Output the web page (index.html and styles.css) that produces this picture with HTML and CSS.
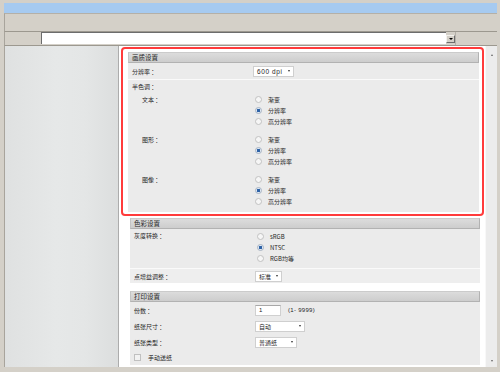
FILE: index.html
```
<!DOCTYPE html>
<html>
    <head>
        <title>打印机设置</title>
        <link rel="stylesheet" href="styles.css">
    </head>
    <body>
        <div class="window">
            <div class="titlebar"></div>
            <div class="toolbar"></div>
            <div class="addressbar">
                <div class="address-left"></div>
                <div class="address-field"></div>
                <div class="address-button"><span class="arrow-down"></span></div>
                <div class="address-right"></div>
            </div>
            <div class="workspace">
                <div class="sidebar"></div>
                <div class="content">
                    <div class="highlight">
                        <div class="section">
                            <div class="section-title">画质设置</div>
                            <div class="row divided">
                                <div class="label">分辨率 ：</div>
                                <span class="select select-dpi">600 dpi<span class="caret"></span></span>
                            </div>
                            <div class="halftone">
                                <div class="halftone-title">半色调 ：</div>
                                <div class="groups">
                                    <div class="group">
                                        <div class="sublabel">文本 ：</div>
                                        <div class="radios">
                                            <div class="radio"><span class="dot"></span>渐变</div>
                                            <div class="radio"><span class="dot checked"></span>分辨率</div>
                                            <div class="radio"><span class="dot"></span>高分辨率</div>
                                        </div>
                                    </div>
                                    <div class="group">
                                        <div class="sublabel">图形 ：</div>
                                        <div class="radios">
                                            <div class="radio"><span class="dot"></span>渐变</div>
                                            <div class="radio"><span class="dot checked"></span>分辨率</div>
                                            <div class="radio"><span class="dot"></span>高分辨率</div>
                                        </div>
                                    </div>
                                    <div class="group">
                                        <div class="sublabel">图像 ：</div>
                                        <div class="radios">
                                            <div class="radio"><span class="dot"></span>渐变</div>
                                            <div class="radio"><span class="dot checked"></span>分辨率</div>
                                            <div class="radio"><span class="dot"></span>高分辨率</div>
                                        </div>
                                    </div>
                                </div>
                            </div>
                        </div>
                    </div>

                    <div class="section section-plain">
                        <div class="section-title">色彩设置</div>
                        <div class="grayscale divided">
                            <div class="label grayscale-label">灰度转换 ：</div>
                            <div class="radios">
                                <div class="radio"><span class="dot"></span>sRGB</div>
                                <div class="radio"><span class="dot checked"></span>NTSC</div>
                                <div class="radio"><span class="dot"></span>RGB均等</div>
                            </div>
                        </div>
                        <div class="row row-light">
                            <div class="label">点增益调整 ：</div>
                            <span class="select select-std">标准<span class="caret"></span></span>
                        </div>
                    </div>

                    <div class="section section-plain section-print">
                        <div class="section-title">打印设置</div>
                        <div class="row">
                            <div class="label">份数 ：</div>
                            <span class="input">1</span>
                            <span class="hint">(1- 9999)</span>
                        </div>
                        <div class="row">
                            <div class="label">纸张尺寸 ：</div>
                            <span class="select select-size">自动<span class="caret"></span></span>
                        </div>
                        <div class="row">
                            <div class="label">纸张类型 ：</div>
                            <span class="select select-type">普通纸<span class="caret"></span></span>
                        </div>
                        <div class="check-row">
                            <span class="checkbox"></span>手动送纸
                        </div>
                    </div>
                </div>
                <div class="scrollbar">
                    <span class="scroll-up"></span>
                    <span class="scroll-down"></span>
                </div>
            </div>
        </div>
    </body>
</html>
```

FILE: styles.css
```
body {
    margin: 0;
    font-family: "Noto Sans CJK SC", "Noto Sans", sans-serif;
    font-size: 6px;
    color: #262626;
}
.window {
    width: 500px;
    height: 372px;
    box-sizing: border-box;
    padding: 3px 3px 5px 4px;
    background: #d4d0c8;
    display: flex;
    flex-direction: column;
}
.titlebar {
    height: 10px;
    background: #a6caf0;
}
.toolbar {
    height: 17px;
    border-top: 1px solid #b4b0a8;
    border-left: 1px solid #a8a49c;
}
.addressbar {
    display: flex;
    height: 13px;
    border-top: 1px solid #9c988f;
    border-left: 1px solid #a8a49c;
}
.address-left {
    width: 36px;
}
.address-field {
    flex: 1;
    margin-bottom: 1px;
    background: #fff;
    border-left: 1px solid #6c6c6c;
    border-top: 1px solid #6c6c6c;
}
.address-button {
    width: 9px;
    height: 8px;
    box-sizing: border-box;
    margin-top: 3px;
    background: #d4d0c8;
    border: 1px solid #f4f2ee;
    border-right-color: #6c6c6c;
    border-bottom-color: #6c6c6c;
    display: flex;
    align-items: center;
    justify-content: center;
}
.arrow-down {
    width: 0;
    height: 0;
    border-left: 2px solid transparent;
    border-right: 2px solid transparent;
    border-top: 2px solid #000;
}
.address-right {
    width: 41px;
    border-left: 1px solid #b4b0a8;
}
.workspace {
    flex: 1;
    min-height: 0;
    display: flex;
    border-top: 1px solid #9c988f;
    border-left: 1px solid #a8a49c;
}
.sidebar {
    width: 113px;
    background: linear-gradient(to right, #dfe1e1, #e6e8e8 45%, #e4e6e6 70%, #dcdede);
    border-right: 1px solid #acacac;
}
.content {
    flex: 1;
    background: #fff;
    padding: 1px 1px 0 2px;
    overflow: hidden;
}
.scrollbar {
    width: 11px;
    background: #ececec;
    border-left: 1px solid #f8f8f8;
    display: flex;
    flex-direction: column;
    justify-content: space-between;
    align-items: center;
    padding: 8px 0 5px;
}
.scroll-up {
    width: 0;
    height: 0;
    border-left: 1.5px solid transparent;
    border-right: 1.5px solid transparent;
    border-bottom: 2px solid #666;
}
.scroll-down {
    width: 0;
    height: 0;
    border-left: 1.5px solid transparent;
    border-right: 1.5px solid transparent;
    border-top: 2px solid #666;
}

/* red frame round the first section */
.highlight {
    border: 2px solid #ff3b3b;
    border-radius: 4px;
    padding: 3px 3px 2px 5px;
}
.section {
    background: #ebebeb;
}
.section-plain {
    margin: 2px 4px 0 9px;
}
.section-print {
    margin-top: 8px;
}
.section-title {
    height: 9px;
    line-height: 9px;
    padding-left: 3px;
    font-size: 6.5px;
    background: linear-gradient(#dcdcdc, #cdcdcd);
    border: 1px solid #b2b2b2;
    border-top-color: #cbcbcb;
    border-left-color: #c4c4c4;
}
.row {
    display: flex;
    align-items: center;
    height: 16px;
}
.divided {
    border-bottom: 1px solid #fafafa;
}
.row-light {
    height: 14px;
    background: #eeeeee;
}
.label {
    width: 121px;
    padding-left: 4px;
}
.halftone {
    padding-bottom: 5px;
}
.halftone-title {
    height: 13px;
    line-height: 13px;
    padding-left: 4px;
}
.groups {
    display: flex;
    flex-direction: column;
    gap: 7px;
    padding-top: 1px;
}
.group {
    display: flex;
}
.sublabel {
    width: 111px;
    padding-left: 14px;
    line-height: 11px;
}
.radios {
    display: flex;
    flex-direction: column;
}
.radio {
    height: 11px;
    display: flex;
    align-items: center;
}
.dot {
    width: 5px;
    height: 5px;
    border-radius: 50%;
    border: 1px solid #c2c2c2;
    background: #f6f6f6;
    margin: 0 6px 0 2px;
}
.dot.checked {
    background: radial-gradient(circle, #2d62a6 0, #2d62a6 1.4px, #dfe8f3 2px);
    border-color: #a8b4c4;
}
.grayscale {
    display: flex;
    padding: 2px 0 4px;
}
.grayscale-label {
    line-height: 10px;
}
.select {
    display: flex;
    align-items: center;
    justify-content: space-between;
    box-sizing: border-box;
    height: 11px;
    padding: 0 3px;
    background: #fff;
    border: 1px solid #cfcfcf;
    font-family: "Liberation Sans", "Noto Sans CJK SC", sans-serif;
}
.select-dpi {
    width: 41px;
    font-size: 6.5px;
    letter-spacing: 0.6px;
}
.select-std {
    width: 27px;
    font-family: "Noto Sans CJK SC", sans-serif;
}
.select-size {
    width: 50px;
    font-family: "Noto Sans CJK SC", sans-serif;
}
.select-type {
    width: 42px;
    font-family: "Noto Sans CJK SC", sans-serif;
}
.caret {
    width: 0;
    height: 0;
    border-left: 1.5px solid transparent;
    border-right: 1.5px solid transparent;
    border-top: 2px solid #333;
}
.input {
    width: 26px;
    height: 11px;
    box-sizing: border-box;
    padding-left: 3px;
    line-height: 9px;
    background: #fff;
    border: 1px solid #d0d0d0;
    border-top-color: #a8a8a8;
    font-family: "Liberation Sans", sans-serif;
}
.hint {
    margin-left: 7px;
    font-family: "Liberation Sans", sans-serif;
    letter-spacing: 0.3px;
}
.check-row {
    height: 15px;
    display: flex;
    align-items: center;
}
.checkbox {
    width: 5px;
    height: 5px;
    border: 1px solid #c0c0c0;
    background: #f2f2f2;
    margin: 0 7px 0 4px;
}
```
